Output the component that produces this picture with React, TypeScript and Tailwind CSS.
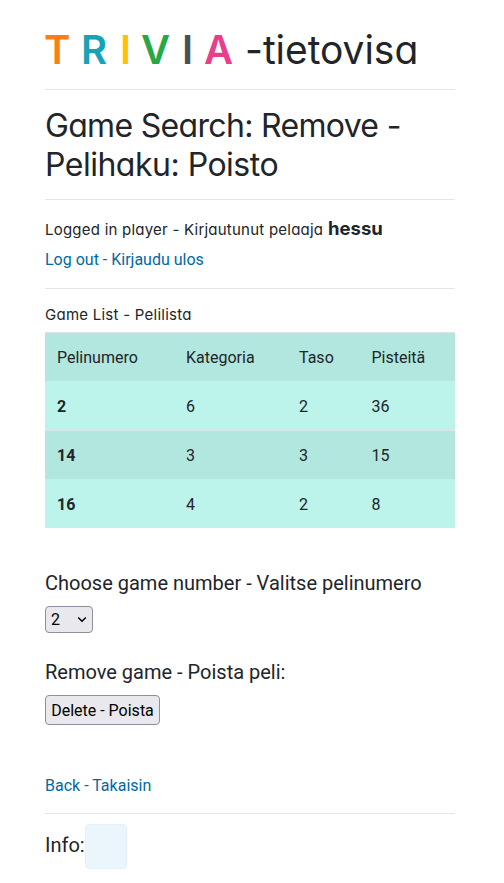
import React from "react";

const heading = "font-['Inter','Mulish',sans-serif] [font-feature-settings:'cv11'] whitespace-nowrap";

const letters = [
  { char: "T", style: "w-[37px] text-[#fd7e14]" },
  { char: "R", style: "w-[39px] text-[#17a2b8]" },
  { char: "I", style: "w-[21px] text-[#ffc107]" },
  { char: "V", style: "w-[41px] text-[#28a745]" },
  { char: "I", style: "w-[22px] text-[#495057]" },
  { char: "A", style: "w-[41px] text-[#e83e8c]" },
];

const games = [
  { id: 2, category: 6, level: 2, points: 36 },
  { id: 14, category: 3, level: 3, points: 15 },
  { id: 16, category: 4, level: 2, points: 8 },
];

function Rule() {
  return <hr className="h-px border-0 bg-[#e5e5e5]" />;
}

export default function App() {
  return (
    <main className="h-[883px] bg-white pr-[49px] pl-[45px] font-['Roboto',sans-serif] text-base leading-6 text-[#212529]">
      <h1 className={`${heading} flex h-[89px] items-start pt-[26px] text-[39px] leading-[48px]`}>
        {letters.map((l, i) => (
          <span key={i} className={`${l.style} -ml-px mr-px shrink-0 text-[40px] font-[570]`}>{l.char}</span>
        ))}
        <span className="-ml-px font-[380] tracking-[-0.05px]">-tietovisa</span>
      </h1>
      <Rule />
      <h2 className={`${heading} h-[109px] pt-[16px] text-[32px] font-[370] leading-[39px]`}>
        <span className="block tracking-[-0.68px]">Game Search: Remove -</span>
        <span className="block tracking-[-0.5px]">Pelihaku: Poisto</span>
      </h2>
      <Rule />
      <div className="h-[88px] pt-[15px]">
        <p className={`${heading} flex h-[32px] items-baseline text-[15px] leading-[26px]`}>
          <span className="w-[283px] tracking-[0.23px]">Logged in player - Kirjautunut pelaaja</span>
          <strong className="text-[18.5px] font-bold">hessu</strong>
        </p>
        <a href="#logout" className="block h-[26px] leading-[26px] text-[#0069a6]">Log out - Kirjaudu ulos</a>
      </div>
      <Rule />
      <p className={`${heading} h-[43px] pt-[14px] text-[15px] leading-[24px] tracking-[0.25px]`}>Game List - Pelilista</p>
      <table className="w-full table-fixed border-collapse text-left">
        <colgroup>
          <col className="w-[129px]" />
          <col className="w-[113px]" />
          <col className="w-[72.5px]" />
          <col />
        </colgroup>
        <thead>
          <tr className="h-[49px] border-t border-[#dee2e6] bg-[#b1e7de]">
            {["Pelinumero", "Kategoria", "Taso", "Pisteitä"].map((name) => (
              <th key={name} className="px-3 pt-[2px] pb-0 font-normal">{name}</th>
            ))}
          </tr>
        </thead>
        <tbody>
          {games.map((g) => (
            <tr key={g.id} className="h-[49px] border-t border-[#dee2e6] bg-[#bcf3eb] last:h-[48px] even:bg-[#b1e7de]">
              <th className="px-3 pt-[2px] pb-0 font-bold">{g.id}</th>
              <td className="px-3 pt-[2px] pb-0">{g.category}</td>
              <td className="px-3 pt-[2px] pb-0">{g.level}</td>
              <td className="px-3 pt-[2px] pb-0">{g.points}</td>
            </tr>
          ))}
        </tbody>
      </table>
      <section className="h-[89px] pt-[43px]">
        <h3 className="h-[35px] text-[20px] leading-6">Choose game number - Valitse pelinumero</h3>
        <button className="flex h-[27px] w-[48px] items-center justify-between rounded-[4px] border border-[#8f8f9d] bg-[#e9e9ed] px-[5px] text-black">
          <span className="pt-px">2</span>
          <svg className="h-[10px] w-[10px]" viewBox="0 0 10 10" fill="none" stroke="black" strokeWidth="1.5">
            <path d="M1.2 3.5 L5 7.3 L8.8 3.5" />
          </svg>
        </button>
      </section>
      <section className="h-[157px] pt-[43px]">
        <h3 className="h-[35px] text-[20px] leading-6">Remove game - Poista peli:</h3>
        <button className="h-[30px] w-[115px] rounded-[4px] border border-[#8f8f9d] bg-[#e9e9ed] pt-[2px] whitespace-nowrap text-black">
          Delete - Poista
        </button>
      </section>
      <a href="#back" className="block h-[39px] leading-[24px] text-[#0069a6]">Back - Takaisin</a>
      <Rule />
      <div className="flex pt-[10px]">
        <span className="w-[40px] text-[20px] leading-[42px]">Info:</span>
        <div className="h-[45px] w-[42px] rounded-[4px] border border-[#e2f2fa] bg-[#ebf6fc]" />
      </div>
    </main>
  );
}
